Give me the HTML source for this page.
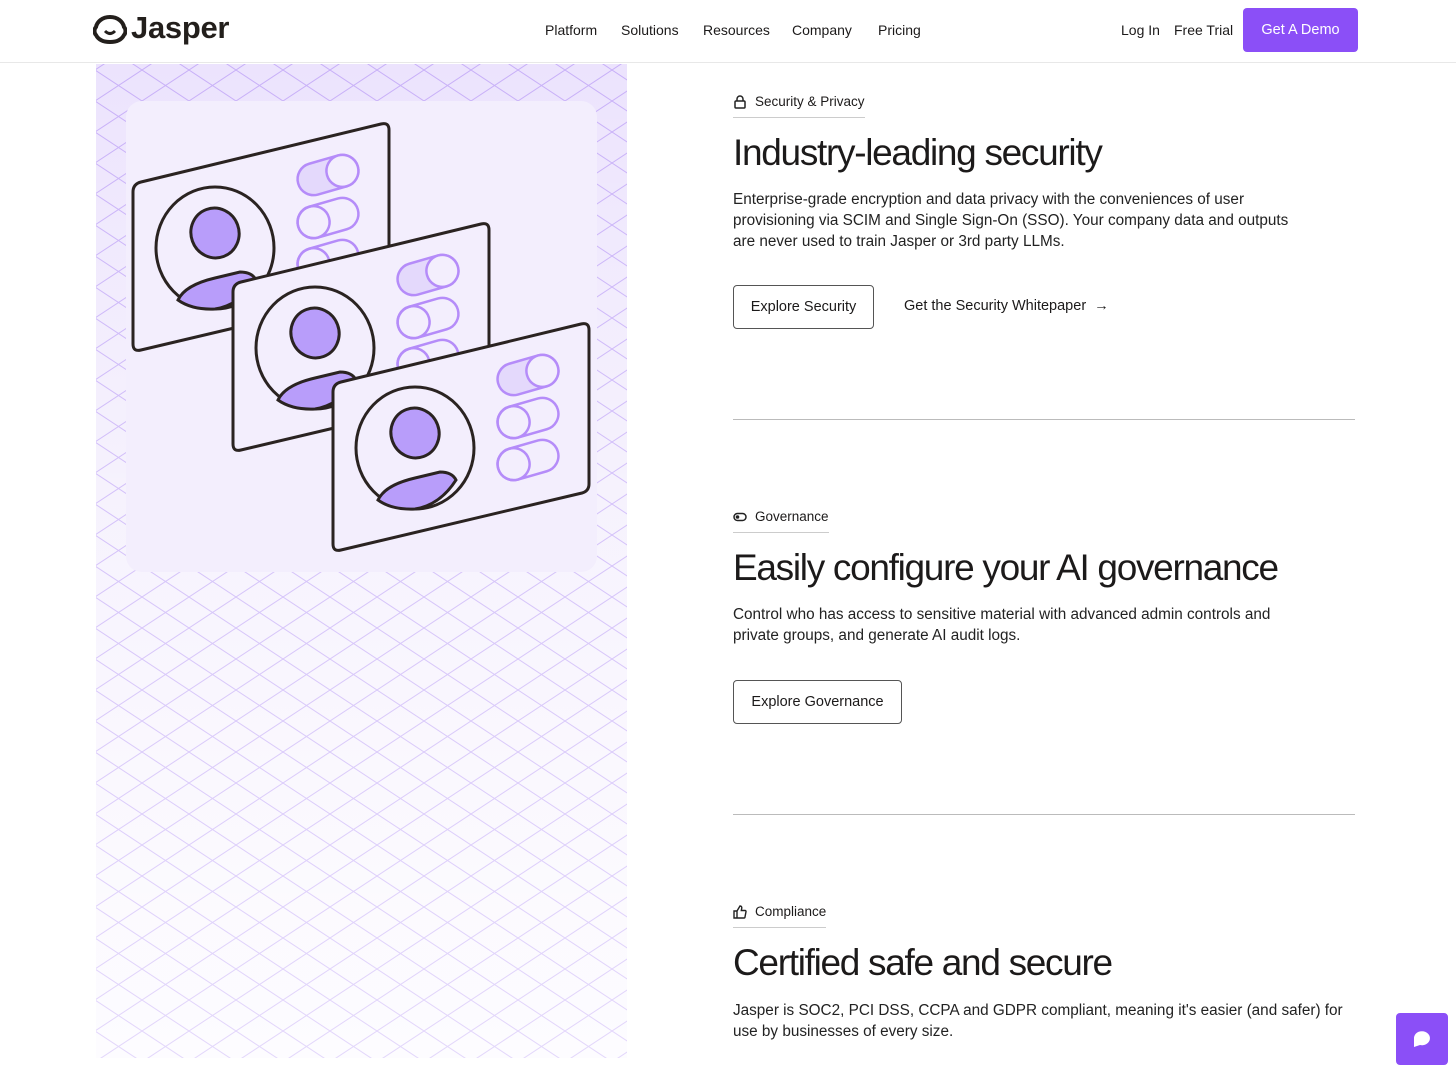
<!DOCTYPE html>
<html><head><meta charset="utf-8"><style>
*{margin:0;padding:0;box-sizing:border-box}
body{width:1456px;height:1058px;overflow:hidden;background:#fff;font-family:"Liberation Sans",sans-serif;color:#1c1a1a;position:relative}
.hdr{position:absolute;left:0;top:0;width:1456px;height:63px;border-bottom:1px solid #e8e8e8;background:#fff}
.nav{position:absolute;top:22px;font-size:14px;color:#1c1a1a;white-space:nowrap}
.demo{position:absolute;left:1243px;top:8px;width:115px;height:44px;background:#8b4ff7;border-radius:4px;color:#fff;font-size:14.5px;text-align:center;line-height:44px}
.left{position:absolute;left:96px;top:64px;width:531px;height:994px;overflow:hidden;background:linear-gradient(#ece3fd,#f3eefd 40%,#fbf9ff)}
.card{position:absolute;left:30px;top:37px;width:471px;height:471px;border-radius:16px;background:#f3eefd}
.lbl{position:absolute;left:733px;font-size:13.5px;padding-bottom:8px;border-bottom:1px solid #ccc;display:flex;align-items:center;gap:8px;white-space:nowrap}
h2{position:absolute;left:733px;font-size:37px;font-weight:400;letter-spacing:-1.3px;color:#1c1a1a;white-space:nowrap}
p{position:absolute;left:733px;width:610px;font-size:15.3px;line-height:21px;color:#222}
.btn{position:absolute;left:733px;height:44px;border:1px solid #555;border-radius:4px;font-size:14.5px;line-height:42px;text-align:center;white-space:nowrap}
.hr{position:absolute;left:733px;width:622px;height:1px;background:#bbb}
.chat{position:absolute;left:1396px;top:1013px;width:52px;height:52px;background:#8b4ff7;border-radius:4px}
</style></head><body>
<div class="hdr">
<svg style="position:absolute;left:93px;top:14px" width="34" height="30" viewBox="0 0 34 30"><path d="M17 3C9 3 4 8 3 13 1 15 1 19 3 21 6 27 12 28 17 28 22 28 28 27 31 21 33 19 33 15 31 13 30 8 25 3 17 3Z" fill="none" stroke="#231f1c" stroke-width="4"/><path d="M12 17Q17 22 22 17" fill="none" stroke="#231f1c" stroke-width="3"/></svg>
<div style="position:absolute;left:131px;top:10px;font-size:31px;font-weight:700;color:#231f1c;letter-spacing:-0.3px">Jasper</div>
<div class="nav" style="left:545px">Platform</div>
<div class="nav" style="left:621px">Solutions</div>
<div class="nav" style="left:703px">Resources</div>
<div class="nav" style="left:792px">Company</div>
<div class="nav" style="left:878px">Pricing</div>
<div class="nav" style="left:1121px">Log In</div>
<div class="nav" style="left:1174px">Free Trial</div>
<div class="demo">Get A Demo</div>
</div>
<div class="left">
<svg width="531" height="994" style="position:absolute;left:0;top:0"><defs><pattern id="g" width="47" height="31" patternUnits="userSpaceOnUse" x="-1" y="6"><path d="M0 0L47 31M47 0L0 31" stroke="#c8b0f8" stroke-width="1" fill="none"/></pattern><linearGradient id="f" x1="0" y1="0" x2="0" y2="1"><stop offset="0" stop-color="#fff" stop-opacity="0"/><stop offset="1" stop-color="#fff" stop-opacity="0.5"/></linearGradient></defs><rect width="531" height="994" fill="url(#g)"/><rect width="531" height="994" fill="url(#f)"/></svg>
<div class="card"></div>
<svg width="531" height="600" style="position:absolute;left:0;top:0" viewBox="96 64 531 600">
<defs><g id="c">
<path d="M133 192Q133 184 141 182L381 124Q389 122 389 130L389 284Q389 291 382 293L141 350Q133 352 133 344Z" fill="#f3eefd" stroke="#2a2321" stroke-width="3"/>
<ellipse cx="215" cy="248" rx="59" ry="61" fill="#f3eefd" stroke="#2a2321" stroke-width="3"/>
<ellipse cx="215" cy="233" rx="24" ry="25" transform="rotate(-20 215 233)" fill="#b89dfa" stroke="#2a2321" stroke-width="3"/>
<path d="M178 300Q185 285 215 278L240 272Q252 272 256 280Q240 305 215 309Q192 310 178 300Z" fill="#b89dfa" stroke="#2a2321" stroke-width="3"/>
<g fill="none" stroke="#b58cf9" stroke-width="2.5">
<g transform="rotate(-16 328 175)"><rect x="297" y="159" width="62" height="32" rx="16" fill="#e4d9fc"/><circle cx="343" cy="175" r="16" fill="#f3eefd"/></g>
<g transform="rotate(-16 328 218)"><rect x="297" y="202" width="62" height="32" rx="16"/><circle cx="313" cy="218" r="16"/></g>
<g transform="rotate(-16 328 260)"><rect x="297" y="244" width="62" height="32" rx="16"/><circle cx="313" cy="260" r="16"/></g>
</g></g></defs>
<use href="#c"/><use href="#c" transform="translate(100 100)"/><use href="#c" transform="translate(200 200)"/>
</svg>
</div>

<div class="lbl" style="top:94px"><svg width="14" height="14" viewBox="0 0 14 14"><rect x="2" y="6" width="10" height="7" rx="1" fill="none" stroke="#222" stroke-width="1.5"/><path d="M4 6V4a3 3 0 0 1 6 0v2" fill="none" stroke="#222" stroke-width="1.5"/></svg>Security &amp; Privacy</div>
<h2 style="top:132px">Industry-leading security</h2>
<p style="top:189px;width:580px">Enterprise-grade encryption and data privacy with the conveniences of user provisioning via SCIM and Single Sign-On (SSO). Your company data and outputs are never used to train Jasper or 3rd party LLMs.</p>
<div class="btn" style="top:285px;width:141px">Explore Security</div>
<div style="position:absolute;left:904px;top:298px;font-size:14.5px;white-space:nowrap">Get the Security Whitepaper &nbsp;→</div>
<div class="hr" style="top:419px"></div>

<div class="lbl" style="top:509px"><svg width="14" height="14" viewBox="0 0 14 14"><rect x="1" y="3.5" width="12" height="7" rx="3.5" fill="none" stroke="#222" stroke-width="1.5"/><circle cx="4.5" cy="7" r="1.8" fill="#222"/></svg>Governance</div>
<h2 style="top:547px">Easily configure your AI governance</h2>
<p style="top:604px;width:580px">Control who has access to sensitive material with advanced admin controls and private groups, and generate AI audit logs.</p>
<div class="btn" style="top:680px;width:169px">Explore Governance</div>
<div class="hr" style="top:814px"></div>

<div class="lbl" style="top:904px"><svg width="14" height="14" viewBox="0 0 14 14"><path d="M1 6h3v7H1zM4 6l3-5c1.5 0 2 1 1.7 2.5L8.3 5.5H12a1 1 0 0 1 1 1.2l-1 5.3a1 1 0 0 1-1 1H4" fill="none" stroke="#222" stroke-width="1.4"/></svg>Compliance</div>
<h2 style="top:942px">Certified safe and secure</h2>
<p style="top:1000px">Jasper is SOC2, PCI DSS, CCPA and GDPR compliant, meaning it's easier (and safer) for use by businesses of every size.</p>
<div class="chat"><svg width="52" height="45" viewBox="0 0 52 45"><path d="M18 26a8 7 0 1 1 6 6l-6 2z" fill="#fff"/></svg></div>
</body></html>
